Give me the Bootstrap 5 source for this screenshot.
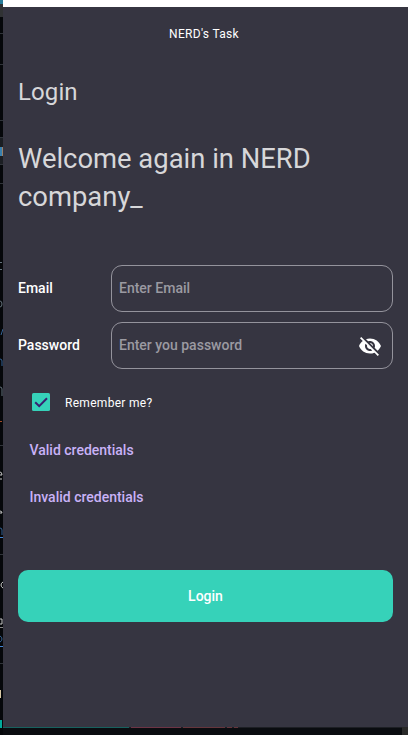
<!DOCTYPE html>
<html lang="en">
<head>
<meta charset="utf-8">
<meta name="viewport" content="width=device-width, initial-scale=1">
<title>NERD's Task</title>
<link href="https://cdn.jsdelivr.net/npm/bootstrap@5.3.0/dist/css/bootstrap.min.css" rel="stylesheet">
<style>
body{background:#0a0c10;font-family:Roboto,"Liberation Sans",sans-serif;color:#fff;height:735px}
.edge{width:3px;height:735px}
.titlebar{height:7px;background:#fff}
.app-window{height:720px;background:#363541;padding:0 15px}
.app-title{font-size:12px;line-height:16px;letter-spacing:.3px;padding:19px 3px 0 0}
.heading{font-size:24px;line-height:32px;letter-spacing:.1px;color:#d7d7d9;margin-top:34px}
.welcome{font-size:27.4px;line-height:38px;color:#d7d7d9;margin-top:32px}
.fields{margin-top:49px;gap:10px}
.field-label{width:93px;font-size:14px;font-weight:500;padding-bottom:1px}
.field-box{height:47px;border:1px solid #94939c;border-radius:11px;padding:0 10.500px 0 7px}
.field-box .form-control{font-size:14px;font-weight:500;color:#fff;line-height:20px;margin-bottom:1px}
.field-box .form-control::placeholder{color:#9b9aa1;opacity:1}
.remember{margin:21px 0 0 11px;height:24px;gap:12px;font-size:12px;letter-spacing:.3px}
.remember span{padding-top:1px}
.creds{margin:26px 0 0 11.500px;gap:27px}
.cred{font-size:14px;line-height:20px;font-weight:500;color:#c9b2f7}
.login-btn{height:52px;margin-top:63px;border-radius:10px;background:#36d2b9;font-size:14px;font-weight:500}
.status{height:8px}
</style>
</head>
<body class="d-flex overflow-hidden">
<svg class="edge flex-shrink-0" viewBox="0 0 3 735" aria-hidden="true">
<path fill="#05070a" d="M0 0h3v735H0z"/><path fill="#303234" d="M0 0h3v17H0z"/><path fill="#287c9a" d="M0 0h3v4H0z"/>
<path fill="#1b1e23" d="M0 137h3v27H0z"/><path fill="#377fae" d="M0 147h2v9H0z"/><path fill="#9a8067" d="M2 147h1v9H2z"/>
<path stroke="#30343a" d="M0 33.500h3M0 64.500h3M0 120.500h3M0 137.500h3M0 164.500h3M0 183.500h3M0 445.500h3M0 554.500h3M0 663.500h3"/>
<g fill="none" stroke="#65727c"><path d="M0 262.500h2M0 269.500h2M0 301q2 0 2 3t-2 3M0 387q2 0 2 2v7"/><path stroke="#356395" d="M3 329l-2 6M0 359q2 0 2 2v5M0 528q2 0 2 2v5M0 636q2 1 2 3t-2 3"/><path stroke="#a44c27" d="M0 421.500h2"/><path stroke="#c8c8c8" d="M0 472q2 0 2 3H0M0 479h2M0 511q2 0 2 2H0M3 582q-2 1-2 3t2 3M0 619h2v5H0"/><path stroke="#4285d5" d="M0 537.500h3M0 646.500h3"/><path stroke="#888" d="M0 627.500h3"/><path stroke="#d8c7a4" d="M.5 690v8"/></g>
<path fill="#00a99a" d="M0 720h2v8H0z"/>
</svg>
<main class="flex-grow-1">
<div class="titlebar"></div>
<section class="app-window d-flex flex-column">
<div class="app-title text-center">NERD's Task</div>
<h1 class="heading fw-normal mb-0">Login</h1>
<p class="welcome mb-0">Welcome again in NERD<br>company_</p>
<form class="d-flex flex-column">
<div class="fields d-flex flex-column">
<div class="d-flex align-items-center">
<label class="field-label flex-shrink-0" for="email">Email</label>
<div class="field-box flex-grow-1 d-flex align-items-center"><input id="email" type="email" class="form-control border-0 bg-transparent shadow-none p-0" placeholder="Enter Email"></div>
</div>
<div class="d-flex align-items-center">
<label class="field-label flex-shrink-0" for="password">Password</label>
<div class="field-box flex-grow-1 d-flex align-items-center"><input id="password" type="password" class="form-control border-0 bg-transparent shadow-none p-0" placeholder="Enter you password">
<svg class="flex-shrink-0" width="24" height="24" viewBox="0 0 24 24" fill="#fff" role="img" aria-label="Show password"><path d="M12 7c2.760 0 5 2.240 5 5 0 .65-.13 1.260-.36 1.830l2.920 2.920c1.510-1.260 2.700-2.890 3.430-4.750-1.730-4.390-6-7.500-11-7.500-1.400 0-2.740.25-3.980.7l2.160 2.160C10.740 7.130 11.350 7 12 7zM2 4.270l2.280 2.280.46.46C3.080 8.300 1.780 10.020 1 12c1.730 4.390 6 7.500 11 7.500 1.550 0 3.030-.3 4.380-.84l.42.42L19.730 22 21 20.730 3.270 3 2 4.270zM7.530 9.800l1.550 1.550c-.05.21-.08.43-.08.65 0 1.660 1.340 3 3 3 .22 0 .44-.03.65-.08l1.550 1.550c-.67.33-1.410.53-2.200.53-2.760 0-5-2.240-5-5 0-.79.2-1.530.53-2.200zm4.310-.78 3.150 3.150.02-.16c0-1.660-1.340-3-3-3l-.17.01z"/></svg></div>
</div>
</div>
<div class="remember d-flex align-items-center">
<svg width="24" height="24" viewBox="0 0 24 24" role="img" aria-label="Checked"><rect x="3" y="3" width="18" height="18" rx="1.500" fill="#36d2b9"/><path d="M6.200 12.200l4 4 7.800-8" fill="none" stroke="#382070" stroke-width="2"/></svg>
<span>Remember me?</span>
</div>
<div class="creds d-flex flex-column align-items-start">
<a class="cred text-decoration-none">Valid credentials</a>
<a class="cred text-decoration-none">Invalid credentials</a>
</div>
<button type="button" class="login-btn btn border-0 text-white w-100">Login</button>
</form>
</section>
<svg class="status d-block w-100" viewBox="0 0 405 8" preserveAspectRatio="none" aria-hidden="true"><path fill="#0a0c10" d="M0 0h405v8H0z"/><path fill="#1d1f24" d="M0 0h405v1H0z"/><path fill="#17615e" d="M0 0h126v1H0z"/><path fill="#6d3445" d="M128 0h50v1h-50z"/><path fill="#65353c" d="M180 0h42v1h-42zM224 0h5v1h-5zM231 0h4v1h-4z"/><path fill="#292929" d="M399 0h6v8h-6z"/></svg>
</main>
<script src="https://cdn.jsdelivr.net/npm/bootstrap@5.3.0/dist/js/bootstrap.bundle.min.js"></script>
</body>
</html>
